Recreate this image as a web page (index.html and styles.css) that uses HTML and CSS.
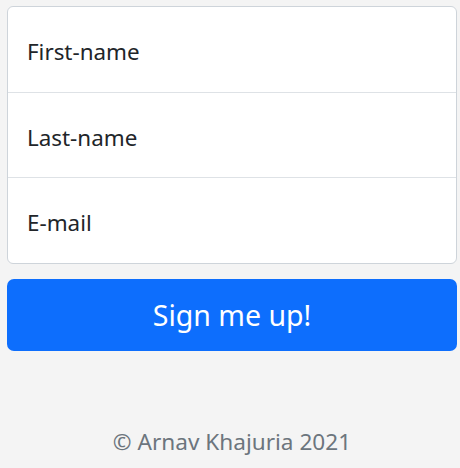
FILE: index.html
```html
<!DOCTYPE html>
<html>
<head>
<meta charset="utf-8">
<link rel="stylesheet" href="styles.css">
</head>
<body>
<main class="page">
  <form class="signup">
    <div class="fields">
      <input class="field" type="text" placeholder="First-name">
      <input class="field" type="text" placeholder="Last-name">
      <input class="field field-last" type="email" placeholder="E-mail">
    </div>
    <button class="submit" type="button">Sign me up!</button>
  </form>
  <footer class="footer">© Arnav Khajuria 2021</footer>
</main>
</body>
</html>
```
FILE: styles.css
```css
* { box-sizing: border-box; }
html, body { margin: 0; padding: 0; }
body {
  background: #f4f4f4;
  font-family: "Noto Sans", "Open Sans", sans-serif;
  color: #212529;
  width: 460px;
  height: 468px;
  overflow: hidden;
}
.page {
  padding: 6px 3px 0 7px;
  display: flex;
  flex-direction: column;
}
.signup {
  display: flex;
  flex-direction: column;
  gap: 15px;
}
.fields {
  display: flex;
  flex-direction: column;
  background: #fff;
  border: 1px solid #ced4da;
  border-radius: 6px;
  overflow: hidden;
}
.field {
  height: 85px;
  border: 0;
  border-top: 1px solid #dee2e6;
  padding: 4px 19px 0;
  font-family: inherit;
  font-size: 22.4px;
  color: #212529;
  background: transparent;
  outline: none;
}
.field:first-child { border-top: 0; }
.field-last { height: 86px; }
.field::placeholder { color: #212529; opacity: 1; }
.submit {
  height: 72px;
  border: 0;
  border-radius: 7px;
  background: #0d6efd;
  color: #fff;
  font-family: inherit;
  font-size: 28.5px;
  padding: 0;
}
.footer {
  margin-top: 75px;
  text-align: center;
  color: #6c757d;
  font-size: 22.6px;
  line-height: 32px;
}
```
